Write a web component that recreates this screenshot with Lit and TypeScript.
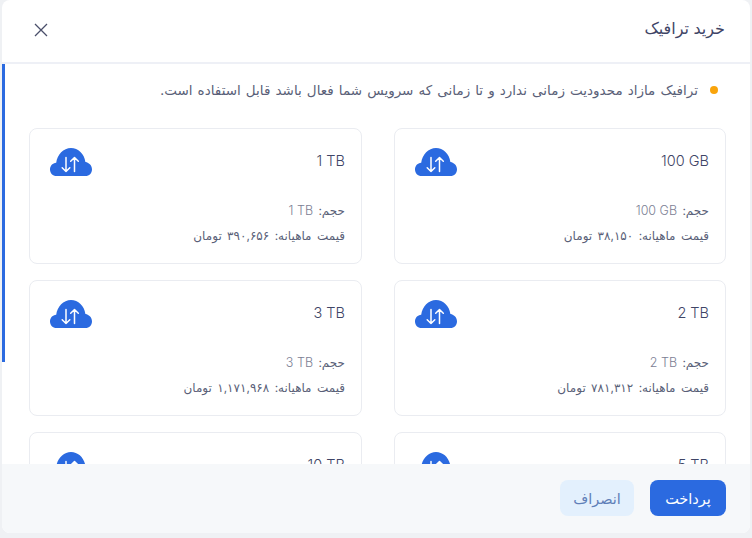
import { LitElement, html, css, svg } from 'lit';
import { customElement } from 'lit/decorators.js';

const plans = [
  { title: '100 GB', price: '۳۸,۱۵۰' },
  { title: '1 TB', price: '۳۹۰,۶۵۶' },
  { title: '2 TB', price: '۷۸۱,۳۱۲' },
  { title: '3 TB', price: '۱,۱۷۱,۹۶۸' },
  { title: '5 TB', price: '۱,۹۵۳,۲۸۰' },
  { title: '10 TB', price: '۳,۹۰۶,۵۶۰' },
];

const cloud = svg`
  <path fill="#2b6ae0" d="M6.500 28C2.800 28 0 25 0 21.400 0 17.900 2.700 15.100 6.200 14.800 7.300 6.500 13.400 0 21 0 28.200 0 34.300 5.800 35.400 13.900 39.300 14.500 42 17.600 42 21.400 42 25 39.200 28 35.500 28Z"/>
  <path fill="none" stroke="#fff" stroke-width="1.500" stroke-linecap="round" stroke-linejoin="round" d="M16 9.500V23.500M12.200 19.700l3.800 3.800 3.800-3.800M24.500 23.500V9.500M20.700 13.300l3.800-3.800 3.800 3.800"/>
`;

@customElement('app-root')
export class AppRoot extends LitElement {
  static styles = css`
    :host {
      display: block;
      height: 538px;
      padding: 0 2px 5px;
      box-sizing: border-box;
      background: #eff1f4;
      font-family: Inter, 'DejaVu Sans', sans-serif;
      overflow: hidden;
    }

    .modal {
      position: relative;
      display: flex;
      flex-direction: column;
      height: 533px;
      background: #fff;
      border-radius: 8px;
      overflow: hidden;
    }

    .header {
      flex: none;
      height: 64px;
      display: flex;
      align-items: center;
      justify-content: space-between;
      padding: 0 25px 6px 32px;
      box-sizing: border-box;
      border-bottom: 2px solid #eef0f6;
      color: #3f4566;
    }

    .title {
      font-size: 16px;
      direction: rtl;
    }

    .close {
      display: block;
      width: 14px;
      height: 14px;
      margin-top: 4px;
    }

    .body {
      flex: 1;
      min-height: 0;
      overflow: hidden;
      direction: rtl;
      padding: 16px 24px 0 27px;
    }

    .scrollbar {
      position: absolute;
      left: 0;
      top: 64px;
      width: 3px;
      height: 298px;
      background: #2b6ae0;
    }

    .notice {
      display: flex;
      align-items: center;
      gap: 12px;
      height: 20px;
      padding-right: 8px;
      font-size: 13.500px;
      word-spacing: 1.300px;
      color: #5a5f78;
      white-space: nowrap;
    }

    .dot {
      width: 8px;
      height: 8px;
      border-radius: 50%;
      background: #f9a40c;
      flex: none;
    }

    .grid {
      display: grid;
      grid-template-columns: 332px 333px;
      justify-content: space-between;
      row-gap: 16px;
      margin-top: 28px;
    }

    .card {
      height: 136px;
      box-sizing: border-box;
      border: 1px solid #eaecf1;
      border-radius: 8px;
      padding: 19px 16px 0 20px;
    }

    .top {
      display: flex;
      justify-content: space-between;
      height: 50px;
    }

    .name {
      font-size: 14.500px;
      font-weight: 300;
      line-height: 26px;
      color: #3f4566;
      direction: ltr;
    }

    .cloud {
      display: block;
      width: 43px;
      height: 28px;
    }

    .line {
      font-size: 12px;
      line-height: 25px;
      word-spacing: 2px;
      color: #5a5f78;
      white-space: nowrap;
    }

    .line .val {
      color: #7c8094;
      unicode-bidi: isolate;
      direction: ltr;
      font-size: 12.500px;
      font-weight: 300;
      word-spacing: 0;
    }

    .footer {
      flex: none;
      height: 69px;
      display: flex;
      direction: rtl;
      gap: 16px;
      padding: 16px 24px 0;
      box-sizing: border-box;
      background: #f6f8fa;
    }

    button {
      height: 36px;
      border: none;
      border-radius: 8px;
      font: inherit;
      font-size: 14.500px;
      padding: 0;
    }

    .pay {
      width: 76px;
      background: #2b6ae0;
      color: #fff;
    }

    .cancel {
      width: 74px;
      background: #e3f0fd;
      color: #5f7fb8;
    }
  `;

  render() {
    return html`
      <div class="modal">
        <div class="header">
          <svg class="close" viewBox="0 0 14 14">
            <path d="M1 1l12 12M13 1L1 13" stroke="#4a4f6a" stroke-width="1.300" fill="none" />
          </svg>
          <div class="title">خرید ترافیک</div>
        </div>
        <div class="body">
          <div class="notice">
            <span class="dot"></span>
            <span>ترافیک مازاد محدودیت زمانی ندارد و تا زمانی که سرویس شما فعال باشد قابل استفاده است.</span>
          </div>
          <div class="grid">
            ${plans.map(
              (p) => html`
                <div class="card">
                  <div class="top">
                    <div class="name">${p.title}</div>
                    <svg class="cloud" viewBox="0 0 43 28">${cloud}</svg>
                  </div>
                  <div class="line">حجم: <span class="val">${p.title}</span></div>
                  <div class="line">قیمت ماهیانه: ${p.price} تومان</div>
                </div>
              `
            )}
          </div>
        </div>
        <div class="footer">
          <button class="pay">پرداخت</button>
          <button class="cancel">انصراف</button>
        </div>
        <div class="scrollbar"></div>
      </div>
    `;
  }
}
